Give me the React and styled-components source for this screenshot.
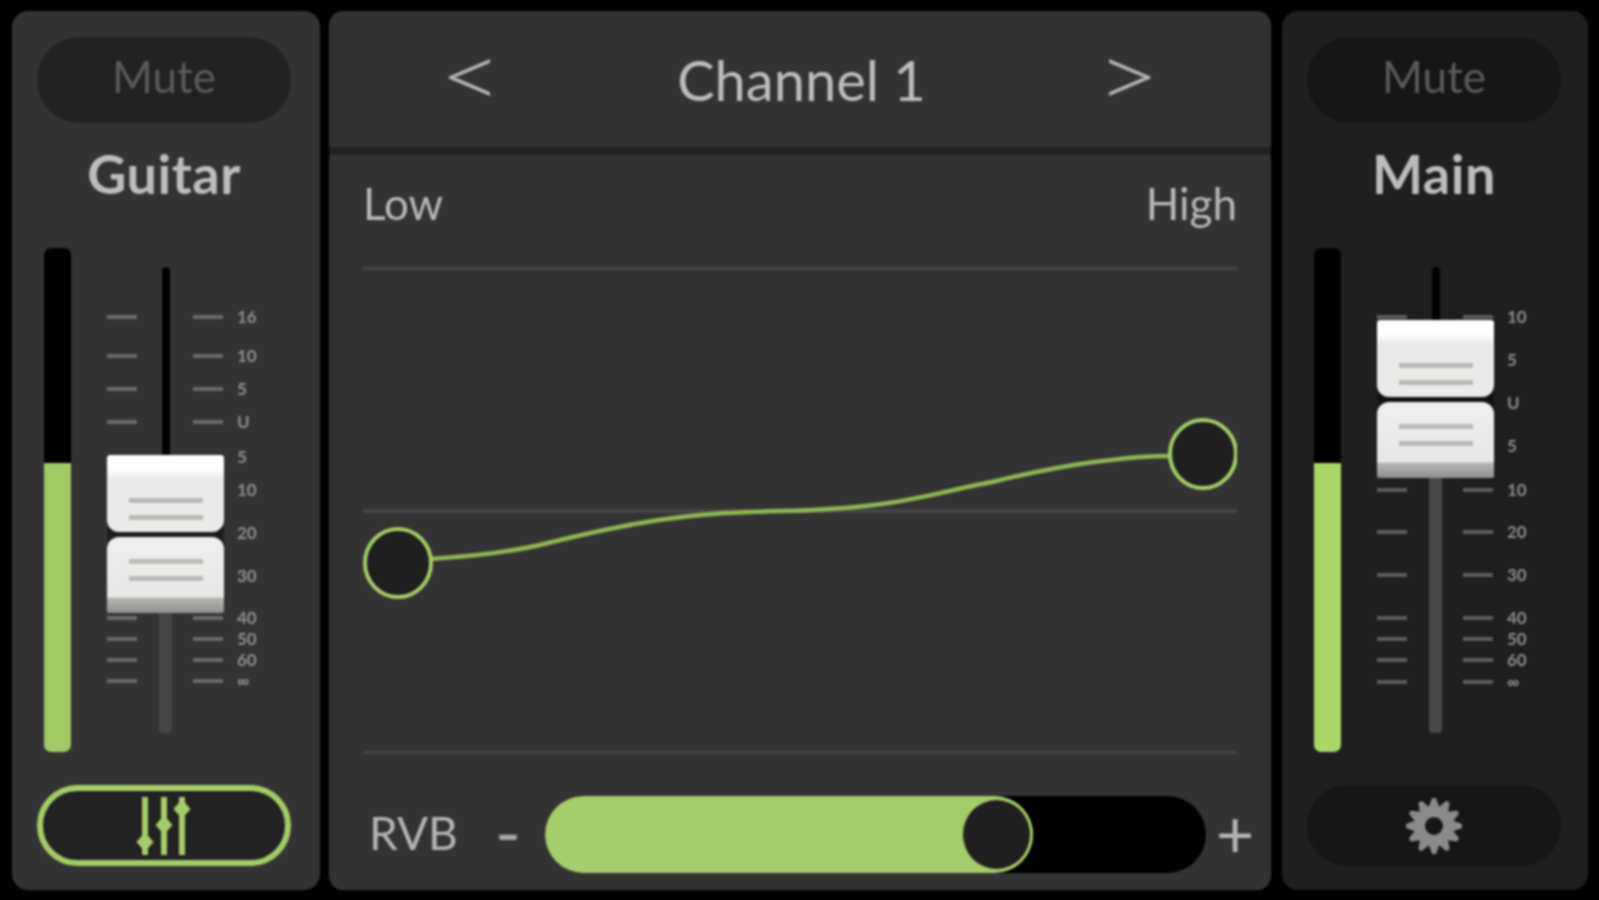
import React from 'react'
import styled, { createGlobalStyle } from 'styled-components'

const GREEN = '#a4cc68'

const GlobalStyle = createGlobalStyle`
  html, body {
    margin: 0;
    height: 100%;
    background: #000;
    overflow: hidden;
  }
  * { box-sizing: border-box; }
`

const Mixer = styled.div`
  display: grid;
  grid-template-columns: 308px 942px 308px;
  column-gap: 9px;
  width: 1599px;
  height: 900px;
  padding: 11px 12px 10px;
  background: #000;
  font-family: Lato, "Liberation Sans", sans-serif;
  filter: blur(1.1px);
`

/* side strips */
const Strip = styled.section`
  display: flex;
  flex-direction: column;
  margin-left: ${p => (p.$main ? '2px' : '0')};
  padding: 26px 0 0 25px;
  border-radius: 16px;
  background: ${p => (p.$main ? '#1f1f1f' : '#333')};
`

const Pill = styled.button`
  display: flex;
  align-items: center;
  justify-content: center;
  width: 254px;
  height: ${p => p.$h}px;
  padding: 0;
  border: ${p => (p.$active ? `6px solid ${GREEN}` : '0')};
  border-radius: 43px;
  background: ${p => (p.$main ? '#161616' : '#222')};
  font-family: inherit;
`

const MuteLabel = styled.span`
  font-size: 44px;
  color: #5a5a5a;
  margin-top: -8px;
`

const StripName = styled.h2`
  width: 254px;
  height: 125px;
  margin: 0;
  padding-top: 15px;
  font-size: 54px;
  line-height: 72px;
  font-weight: 700;
  letter-spacing: 0.5px;
  text-align: center;
  color: #bdbdbd;
`

const FaderArea = styled.div`
  display: flex;
  height: 504px;
  margin-bottom: 33px;
`

const Meter = styled.div`
  display: flex;
  flex-direction: column;
  justify-content: flex-end;
  width: 27px;
  margin-left: 7px;
  border-radius: 7px;
  background: #000;
  overflow: hidden;
`

const MeterFill = styled.div`
  height: 289px;
  background: ${p => (p.$main ? '#a9d666' : '#a1ca64')};
`

const Fader = styled.div`
  position: relative;
  width: 190px;
  margin-left: 36px;
`

const Track = styled.div`
  position: absolute;
  top: 19px;
  left: 52px;
  width: 13px;
  height: 466px;
  display: flex;
  flex-direction: column;
  align-items: center;
`

const TrackTop = styled.div`
  width: 8px;
  height: ${p => p.$h}px;
  border-radius: 4px 4px 0 0;
  background: #000;
`

const TrackBottom = styled.div`
  flex: 1;
  width: 13px;
  border-radius: 0 0 4px 4px;
  background: ${p => (p.$main ? '#484848' : '#464646')};
`

const Scale = styled.div`
  position: relative;
  display: flex;
  flex-direction: column;
`

const ScaleRow = styled.div`
  display: grid;
  grid-template-columns: 30px 30px 14px auto;
  height: 4px;
  margin-top: ${p => p.$gap}px;
`

const Tick = styled.i`
  display: block;
  height: 4px;
  grid-column: ${p => p.$col};
  width: 30px;
  margin-left: ${p => p.$shift}px;
  background: ${p => (p.$main ? '#5c5c5c' : '#6a6a6a')};
`

const ScaleLabel = styled.span`
  grid-column: 4;
  margin-left: 56px;
  font-size: 17px;
  font-weight: 700;
  line-height: 4px;
  color: ${p => (p.$main ? '#8c8c8c' : '#8f8f8f')};
`

const Handle = styled.div`
  position: absolute;
  top: ${p => p.$top}px;
  left: 0;
  width: 117px;
  display: flex;
  flex-direction: column;
  gap: 5px;
  background: ${p => (p.$main ? '#111' : '#1c1c1c')};
`

const CapTop = styled.div`
  display: flex;
  flex-direction: column;
  align-items: center;
  gap: 12px;
  height: 77px;
  padding-top: 43px;
  border-radius: 3px 3px 12px 12px;
  background: linear-gradient(#fff 0, #fff 14px, #e9ebe8 24px, #e9ebe8 100%);
`

const CapBottom = styled.div`
  display: flex;
  flex-direction: column;
  align-items: center;
  gap: 12px;
  height: 76px;
  padding-top: 22px;
  border-radius: 12px 12px 2px 2px;
  background: linear-gradient(#eef0ed 0, #e6e8e5 60px, #b6b7b3 61px, #8f908d 100%);
`

const Groove = styled.i`
  display: block;
  width: 74px;
  height: 5px;
  background: #b8bcb6;
`

/* channel panel */
const Channel = styled.main`
  display: flex;
  flex-direction: column;
  border-radius: 14px;
  background: #333;
  overflow: hidden;
`

const Header = styled.header`
  display: flex;
  align-items: center;
  justify-content: space-between;
  height: 144px;
  padding: 0 117px 4px 116px;
  border-bottom: 8px solid #222;
`

const Arrow = styled.span`
  display: inline-block;
  font-size: 90px;
  font-weight: 300;
  line-height: 76px;
  margin-top: -8px;
  color: #b4b4b4;
  transform: scaleX(1.22);
`

const Title = styled.h1`
  margin: 4px 0 0 4px;
  font-size: 56px;
  font-weight: 400;
  color: #bcbcbc;
`

const Body = styled.div`
  display: flex;
  flex-direction: column;
  flex: 1;
  padding: 0 34px 15px 34px;
`

const Range = styled.div`
  display: flex;
  justify-content: space-between;
  height: 112px;
  padding-top: 26px;
  font-size: 44px;
  line-height: 44px;
  color: #b8b8b8;
`

const Graph = styled.svg`
  display: block;
  flex: none;
  width: 874px;
  height: 488px;
  margin-bottom: 41px;
`

const SendRow = styled.div`
  display: flex;
  align-items: center;
  height: 77px;
`

const SendLabel = styled.span`
  flex: none;
  width: 129px;
  padding-left: 6px;
  margin-top: -4px;
  font-size: 46px;
  color: #b4b4b4;
`

const Minus = styled.span`
  flex: none;
  width: 53px;
  padding-left: 3px;
  margin-top: -7px;
  font-size: 70px;
  color: #a8a8a8;
`

const Slider = styled.div`
  flex: none;
  width: 661px;
  height: 77px;
  border-radius: 39px;
  background: #000;
`

const SliderFill = styled.div`
  display: flex;
  align-items: center;
  justify-content: flex-end;
  height: 100%;
  border-radius: 39px;
  background: #a6cd6b;
`

const Knob = styled.i`
  display: block;
  width: 73px;
  height: 75px;
  border: 3px solid ${GREEN};
  border-radius: 50%;
  background: #1f1f1f;
`

const Plus = styled.span`
  flex: none;
  margin: -4px 0 0 10px;
  font-size: 66px;
  line-height: 60px;
  color: #b4b4b4;
`

const scaleGuitar = [
  ['16', 317], ['10', 356], ['5', 389], ['U', 422], ['5', 457], ['10', 490],
  ['20', 533], ['30', 576], ['40', 618], ['50', 639], ['60', 660], ['∞', 681],
]

const scaleMain = [
  ['10', 317], ['5', 360], ['U', 403], ['5', 446], ['10', 490], ['20', 532],
  ['30', 575], ['40', 618], ['50', 639], ['60', 660], ['∞', 682],
]

function FaderScale({ marks, main }) {
  return (
    <Scale>
      {marks.map(([label, y], i) => (
        <ScaleRow key={i} $gap={i === 0 ? y - 2 - 248 : y - marks[i - 1][1] - 4}>
          <Tick $col={1} $shift={0} $main={main} />
          <Tick $col={2} $shift={56} $main={main} />
          <ScaleLabel $main={main}>{label}</ScaleLabel>
        </ScaleRow>
      ))}
    </Scale>
  )
}

function MixerFader({ marks, main, top, blackHeight }) {
  return (
    <FaderArea>
      <Meter>
        <MeterFill $main={main} />
      </Meter>
      <Fader>
        <Track>
          <TrackTop $h={blackHeight} />
          <TrackBottom $main={main} />
        </Track>
        <FaderScale marks={marks} main={main} />
        <Handle $top={top} $main={main}>
          <CapTop>
            <Groove />
            <Groove />
          </CapTop>
          <CapBottom>
            <Groove />
            <Groove />
          </CapBottom>
        </Handle>
      </Fader>
    </FaderArea>
  )
}

function SlidersIcon() {
  return (
    <svg width="56" height="60" viewBox="0 0 56 60">
      <g fill={GREEN}>
        <rect x="6" y="1" width="6" height="58" />
        <rect x="25" y="1" width="6" height="58" />
        <rect x="43" y="1" width="6" height="58" />
        <path d="M9 36 L17.5 46 L9 56 L0.5 46 Z" />
        <path d="M28 19 L36.5 29 L28 39 L19.5 29 Z" />
        <path d="M46 3 L54.5 13 L46 23 L37.5 13 Z" />
      </g>
    </svg>
  )
}

function GearIcon() {
  const teeth = 12
  const pts = []
  for (let i = 0; i < teeth; i++) {
    const a = (i / teeth) * Math.PI * 2
    const step = Math.PI * 2 / teeth
    const at = (r, o) => `${(30 + r * Math.sin(a + o)).toFixed(2)} ${(30 - r * Math.cos(a + o)).toFixed(2)}`
    pts.push(at(20, -step * 0.5), at(28, -step * 0.13), at(28, step * 0.13))
  }
  return (
    <svg width="60" height="60" viewBox="0 0 60 60">
      <path d={`M${pts.join(' L')} Z`} fill="#8a8a8a" />
      <circle cx="30" cy="30" r="9" fill="#161616" />
    </svg>
  )
}

export default function App() {
  return (
    <>
      <GlobalStyle />
      <Mixer>
        <Strip>
          <Pill $h={86}>
            <MuteLabel>Mute</MuteLabel>
          </Pill>
          <StripName>Guitar</StripName>
          <MixerFader marks={scaleGuitar} top={207} blackHeight={232} />
          <Pill $h={81} $active>
            <SlidersIcon />
          </Pill>
        </Strip>

        <Channel>
          <Header>
            <Arrow>&lt;</Arrow>
            <Title>Channel 1</Title>
            <Arrow>&gt;</Arrow>
          </Header>
          <Body>
            <Range>
              <span>Low</span>
              <span>High</span>
            </Range>
            <Graph viewBox="0 0 874 488">
              <g fill="#444">
                <rect x="0" y="0" width="874" height="3" />
                <rect x="0" y="242" width="874" height="4" />
                <rect x="0" y="484" width="874" height="3" />
              </g>
              <path
                d="M67 292 C115 289 150 285 185 276 C250 260 300 250 362 246 C420 243 460 245 511 238 C560 232 590 222 629 215 C670 205 710 197 748 193 C770 190 785 189 807 189"
                fill="none"
                stroke="#8fb654"
                strokeWidth="4.5"
              />
              <ellipse cx="35" cy="296" rx="33" ry="34" fill="#1f1f1f" stroke={GREEN} strokeWidth="4" />
              <ellipse cx="840" cy="187" rx="33" ry="34" fill="#1f1f1f" stroke={GREEN} strokeWidth="4" />
            </Graph>
            <SendRow>
              <SendLabel>RVB</SendLabel>
              <Minus>-</Minus>
              <Slider>
                <SliderFill style={{ width: `${(488 / 661) * 100}%` }}>
                  <Knob />
                </SliderFill>
              </Slider>
              <Plus>+</Plus>
            </SendRow>
          </Body>
        </Channel>

        <Strip $main>
          <Pill $h={86} $main>
            <MuteLabel>Mute</MuteLabel>
          </Pill>
          <StripName>Main</StripName>
          <MixerFader marks={scaleMain} main top={72} blackHeight={100} />
          <Pill $h={81} $main>
            <GearIcon />
          </Pill>
        </Strip>
      </Mixer>
    </>
  )
}
